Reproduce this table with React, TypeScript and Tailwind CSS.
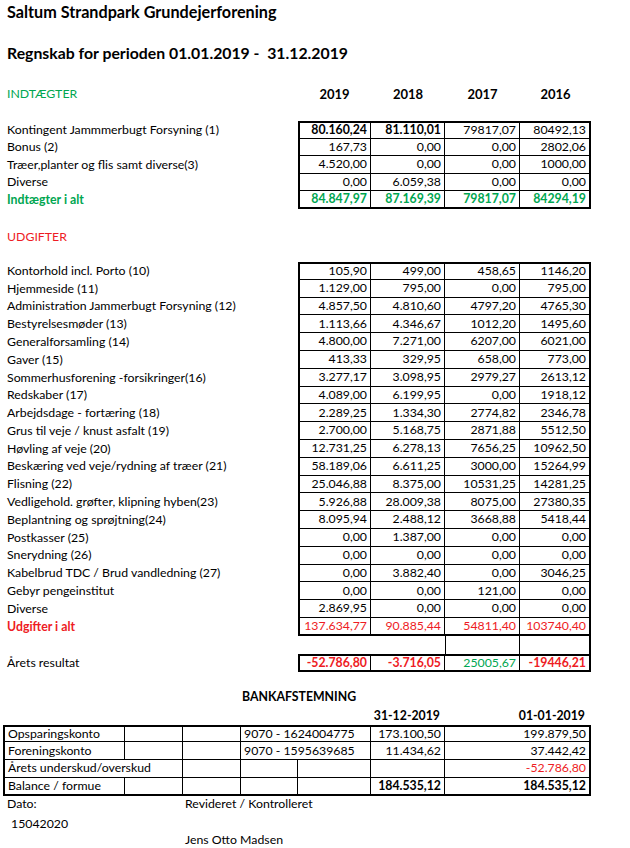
import React from 'react';

type Row = { label: string; v: string[]; bold?: boolean[] };

const INCOME: Row[] = [
  { label: 'Kontingent Jammmerbugt Forsyning (1)', v: ['80.160,24', '81.110,01', '79817,07', '80492,13'], bold: [true, true, false, false] },
  { label: 'Bonus (2)', v: ['167,73', '0,00', '0,00', '2802,06'] },
  { label: 'Træer,planter og flis samt diverse(3)', v: ['4.520,00', '0,00', '0,00', '1000,00'] },
  { label: 'Diverse', v: ['0,00', '6.059,38', '0,00', '0,00'] },
];

const EXPENSES: Row[] = [
  { label: 'Kontorhold incl. Porto (10)', v: ['105,90', '499,00', '458,65', '1146,20'] },
  { label: 'Hjemmeside (11)', v: ['1.129,00', '795,00', '0,00', '795,00'] },
  { label: 'Administration Jammerbugt Forsyning (12)', v: ['4.857,50', '4.810,60', '4797,20', '4765,30'] },
  { label: 'Bestyrelsesmøder (13)', v: ['1.113,66', '4.346,67', '1012,20', '1495,60'] },
  { label: 'Generalforsamling (14)', v: ['4.800,00', '7.271,00', '6207,00', '6021,00'] },
  { label: 'Gaver (15)', v: ['413,33', '329,95', '658,00', '773,00'] },
  { label: 'Sommerhusforening -forsikringer(16)', v: ['3.277,17', '3.098,95', '2979,27', '2613,12'] },
  { label: 'Redskaber (17)', v: ['4.089,00', '6.199,95', '0,00', '1918,12'] },
  { label: 'Arbejdsdage - fortæring (18)', v: ['2.289,25', '1.334,30', '2774,82', '2346,78'] },
  { label: 'Grus til veje / knust asfalt (19)', v: ['2.700,00', '5.168,75', '2871,88', '5512,50'] },
  { label: 'Høvling af veje (20)', v: ['12.731,25', '6.278,13', '7656,25', '10962,50'] },
  { label: 'Beskæring ved veje/rydning af træer (21)', v: ['58.189,06', '6.611,25', '3000,00', '15264,99'] },
  { label: 'Flisning (22)', v: ['25.046,88', '8.375,00', '10531,25', '14281,25'] },
  { label: 'Vedligehold. grøfter, klipning hyben(23)', v: ['5.926,88', '28.009,38', '8075,00', '27380,35'] },
  { label: 'Beplantning og sprøjtning(24)', v: ['8.095,94', '2.488,12', '3668,88', '5418,44'] },
  { label: 'Postkasser (25)', v: ['0,00', '1.387,00', '0,00', '0,00'] },
  { label: 'Snerydning (26)', v: ['0,00', '0,00', '0,00', '0,00'] },
  { label: 'Kabelbrud TDC / Brud vandledning (27)', v: ['0,00', '3.882,40', '0,00', '3046,25'] },
  { label: 'Gebyr pengeinstitut', v: ['0,00', '0,00', '121,00', '0,00'] },
  { label: 'Diverse', v: ['2.869,95', '0,00', '0,00', '0,00'] },
];

const GRID = 'grid grid-cols-[298px_73px_74px_75px_71px]';

function Cell({ value, first, last, top, bottom, className = '' }: {
  value: string; first: boolean; last: boolean; top: boolean; bottom: boolean; className?: string;
}) {
  return (
    <div
      className={`flex items-center justify-end pr-[3px] border-black ${first ? 'border-l-2' : ''} ${last ? 'border-r-2' : 'border-r'} ${top ? 'border-t-2' : ''} ${bottom ? 'border-b-2' : 'border-b'} ${className}`}
    >
      {value}
    </div>
  );
}

function Table({ rows, total, totalColor, rowH }: { rows: Row[]; total: Row; totalColor: string; rowH: string }) {
  const all = [...rows, total];
  return (
    <div>
      {all.map((r, i) => {
        const isTotal = i === all.length - 1;
        return (
          <div key={i} className={`${GRID} ${rowH}`}>
            <div className={`flex items-center pl-[7px] ${isTotal ? `font-bold ${totalColor}` : ''}`}>{r.label}</div>
            {r.v.map((val, j) => (
              <Cell
                key={j}
                value={val}
                first={j === 0}
                last={j === 3}
                top={i === 0}
                bottom={isTotal}
                className={`${isTotal ? totalColor : ''} ${r.bold && r.bold[j] ? 'font-bold' : ''}`}
              />
            ))}
          </div>
        );
      })}
    </div>
  );
}

function BankCell({ children, span = '', right = false, bold = false, red = false, first = false, last = false, top = false, bottom = false }: {
  children?: React.ReactNode; span?: string; right?: boolean; bold?: boolean; red?: boolean;
  first?: boolean; last?: boolean; top?: boolean; bottom?: boolean;
}) {
  return (
    <div
      className={`flex items-center whitespace-nowrap border-black ${span} ${right ? 'justify-end pr-[3px]' : 'pl-[3px]'} ${bold ? 'font-bold' : ''} ${red ? 'text-[#ee1c24]' : ''} ${first ? 'border-l-2' : ''} ${last ? 'border-r-2' : 'border-r'} ${top ? 'border-t-2' : ''} ${bottom ? 'border-b-2' : 'border-b'}`}
    >
      {children}
    </div>
  );
}

export default function App() {
  const green = 'text-[#00a651]';
  const red = 'text-[#ee1c24]';

  return (
    <div className="w-[630px] h-[848px] bg-white text-black text-[12.3px] leading-none font-['Lato',sans-serif] overflow-hidden pt-[3px]">
      <div className="h-[18px] flex items-center pl-[7px] text-[16.2px] font-bold">Saltum Strandpark Grundejerforening</div>
      <div className="h-[18px] mt-[23px] flex items-center pl-[7px] text-[15.8px] font-bold whitespace-pre">
        Regnskab for perioden 01.01.2019 -  31.12.2019
      </div>

      {/* Indtægter */}
      <div className={`${GRID} h-[18px] mt-[23px] items-center`}>
        <div className={`pl-[7px] ${green}`}>INDTÆGTER</div>
        <div className="text-center font-bold text-[13px]">2019</div>
        <div className="text-center font-bold text-[13px]">2018</div>
        <div className="text-center font-bold text-[13px]">2017</div>
        <div className="text-center font-bold text-[13px]">2016</div>
      </div>
      <div className="mt-[18px]">
        <Table
          rows={INCOME}
          total={{ label: 'Indtægter i alt', v: ['84.847,97', '87.169,39', '79817,07', '84294,19'], bold: [true, true, true, true] }}
          totalColor={green}
          rowH="h-[17.6px]"
        />
      </div>

      {/* Udgifter */}
      <div className={`h-[18px] mt-[19px] flex items-center pl-[7px] ${red}`}>UDGIFTER</div>
      <div className="mt-[16px]">
        <Table
          rows={EXPENSES}
          total={{ label: 'Udgifter i alt', v: ['137.634,77', '90.885,44', '54811,40', '103740,40'] }}
          totalColor={red}
          rowH="h-[17.8px]"
        />
      </div>

      {/* blank row */}
      <div className={`${GRID} h-[18px]`}>
        <div />
        <div />
        <div />
        <div className="border-l border-r border-black" />
        <div className="border-r-2 border-black" />
      </div>

      {/* Årets resultat */}
      <div className={`${GRID} h-[18px]`}>
        <div className="flex items-center pl-[7px]">Årets resultat</div>
        <Cell value="-52.786,80" first last={false} top bottom className={`font-bold ${red}`} />
        <Cell value="-3.716,05" first={false} last={false} top bottom className={`font-bold ${red}`} />
        <Cell value="25005,67" first={false} last={false} top bottom className={green} />
        <Cell value="-19446,21" first={false} last top bottom className={`font-bold ${red}`} />
      </div>

      {/* Bankafstemning */}
      <div className="h-[18px] mt-[16px] flex items-center pl-[242px] font-bold">BANKAFSTEMNING</div>
      <div className="h-[18px] mt-[1px] grid grid-cols-[445px_146px] items-center font-bold">
        <div className="text-right pr-[5px]">31-12-2019</div>
        <div className="text-right pr-[6px]">01-01-2019</div>
      </div>

      <div className="ml-[3px] grid grid-cols-[122px_58px_58px_57px_73px_74px_146px] auto-rows-[17.75px]">
        <BankCell first top>Opsparingskonto</BankCell>
        <BankCell top />
        <BankCell top />
        <BankCell top span="col-span-2">9070 - 1624004775</BankCell>
        <BankCell top right>173.100,50</BankCell>
        <BankCell top last right>199.879,50</BankCell>

        <BankCell first>Foreningskonto</BankCell>
        <BankCell />
        <BankCell />
        <BankCell span="col-span-2">9070 - 1595639685</BankCell>
        <BankCell right>11.434,62</BankCell>
        <BankCell last right>37.442,42</BankCell>

        <BankCell first span="col-span-2">Årets underskud/overskud</BankCell>
        <BankCell />
        <BankCell />
        <BankCell />
        <BankCell />
        <BankCell last right red>-52.786,80</BankCell>

        <BankCell first bottom>Balance / formue</BankCell>
        <BankCell bottom />
        <BankCell bottom />
        <BankCell bottom />
        <BankCell bottom />
        <BankCell bottom right bold>184.535,12</BankCell>
        <BankCell bottom last right bold>184.535,12</BankCell>
      </div>

      {/* Footer */}
      <div className="grid grid-cols-[185px_1fr] h-[16px] items-center">
        <div className="pl-[7px]">Dato:</div>
        <div>Revideret / Kontrolleret</div>
      </div>
      <div className="h-[16px] mt-[4px] flex items-center pl-[11px]">15042020</div>
      <div className="h-[16px] flex items-center pl-[185px]">Jens Otto Madsen</div>
    </div>
  );
}
